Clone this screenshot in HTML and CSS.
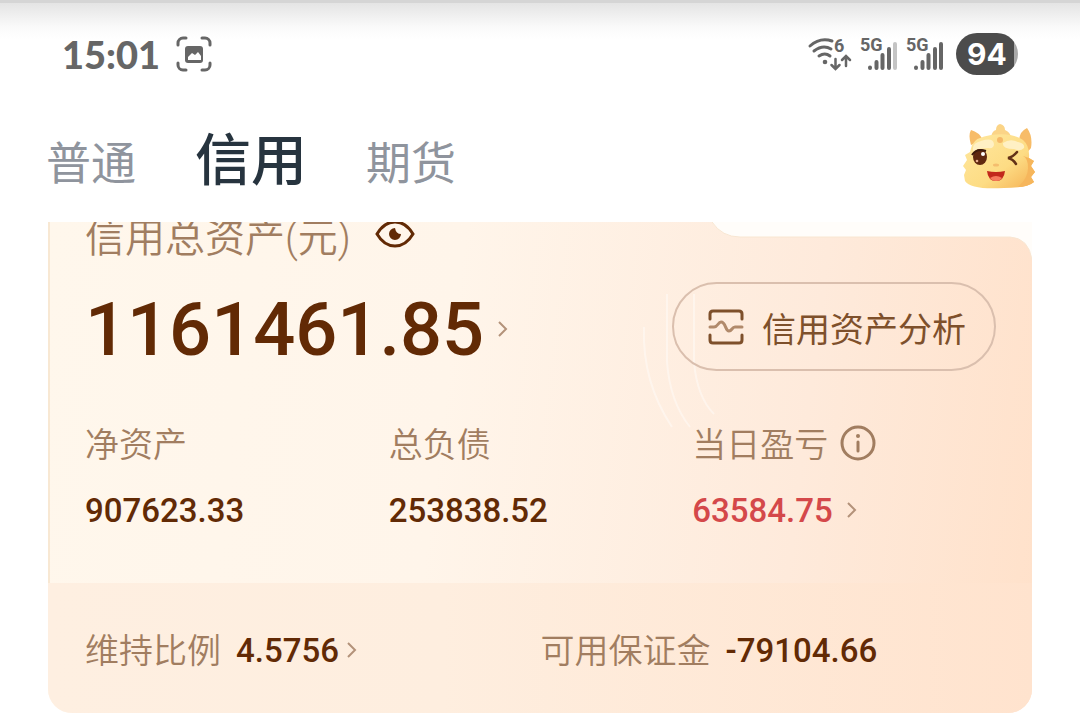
FILE: index.html
```html
<!DOCTYPE html>
<html lang="zh-CN">
<head>
  <meta charset="UTF-8">
  <meta name="viewport" content="width=device-width, initial-scale=1.0">
  <title>信用账户</title>
  <link rel="stylesheet" href="styles.css">
</head>
<body>
  <div class="status-bar">
    <div class="status-left">
      <span class="time">15:01</span>
      <svg class="icon-shot" viewBox="0 0 36 36" width="36" height="36" fill="none" stroke="#666" stroke-width="3" stroke-linecap="round">
        <path d="M2 9V7a5 5 0 0 1 5-5h3M26 2h3a5 5 0 0 1 5 5v2M34 27v2a5 5 0 0 1-5 5h-3M10 34H7a5 5 0 0 1-5-5v-2"/>
        <rect x="9" y="10" width="18" height="17" rx="3" fill="#666" stroke="none"/>
        <path d="M12 24v-3l4-4 3 2 3-3 3 4v4z" fill="#fff" stroke="none"/>
      </svg>
    </div>
    <div class="status-right">
      <svg viewBox="0 0 44 36" width="44" height="36" fill="none" stroke="#666" stroke-width="3" stroke-linecap="round">
        <path d="M2 10Q12 1 24 5M6 15q9-7 17-2M11 20q6-4 11 0"/>
        <circle cx="17" cy="26" r="2.3" fill="#666" stroke="none"/>
        <path d="M27.500 23v9M23.500 29l4 4 4-4M38 30v-9M34 24l4-4 4 4" stroke-width="2.500"/>
        <text class="net" x="26" y="16">6</text>
      </svg>
      <svg viewBox="0 0 38 36" width="38" height="36" stroke="#666" stroke-width="4" stroke-linecap="round">
        <text class="net" x="0" y="15">5G</text>
        <path d="M10 31.500v.5M16.500 26v6M22.500 19v13M29 13v19"/>
        <path d="M35 8v24" stroke="#c4c4c4"/>
      </svg>
      <svg viewBox="0 0 38 36" width="38" height="36" stroke="#666" stroke-width="4" stroke-linecap="round">
        <text class="net" x="0" y="15">5G</text>
        <path d="M10 31.500v.5M16.500 26v6M22.500 19v13M29 13v19M35 8v24"/>
      </svg>
      <span class="battery">94</span>
    </div>
  </div>

  <header class="header">
    <nav class="tabs">
      <a href="#" class="tab">普通</a>
      <a href="#" class="tab active">信用</a>
      <a href="#" class="tab">期货</a>
    </nav>
    <svg class="mascot" viewBox="0 0 72 68" width="72" height="68">
      <defs>
        <linearGradient id="face" x1="0" y1="0" x2="1" y2="1">
          <stop offset="0" stop-color="#ffe8a0"/>
          <stop offset=".6" stop-color="#fddc84"/>
          <stop offset="1" stop-color="#f5b052"/>
        </linearGradient>
      </defs>
      <path d="M8 22Q5 12 8 7q8 2 12 10zM56 17q1-9 8-12 6 8 4 20l-6 7z" fill="#f7bc68"/>
      <path d="M28 14q1-6 5-7 0-5 4-6 5 1 5 6 5 2 6 7z" fill="#fbd487"/>
      <path d="M9 22Q13 14 28 12q20-3 32 5 7 6 6 18l5 3-3 5 4 6-4 5 3 5q-7 6-30 6Q8 67 2 58l-1-6 2-5-3-4 4-6-2-5 5-3z" fill="url(#face)"/>
      <path d="M60 33q5 2 5 12t-10 19q10 0 16-5l-3-5 4-5-4-6 3-5-5-3z" fill="#f6b65c"/>
      <path d="M10 25q0-5 8-7 12-4 13 3 0 5-6 4-8 0-15 3zM40 20q7-5 15-1 7 1 6 6-4 4-10 1-12 0-11-6z" fill="#fff0c4"/>
      <circle cx="37" cy="17" r="3" fill="#f5b868"/>
      <ellipse cx="17" cy="34" rx="7" ry="8" fill="#60280f"/>
      <path d="M9 32q5-7 14-4" fill="none" stroke="#3e1b0d" stroke-width="2"/>
      <circle cx="20" cy="31" r="2" fill="#fff"/>
      <circle cx="14" cy="38" r="1.300" fill="#e8b092"/>
      <path d="M54 29q-4 5-9 6 5 1 8 6" fill="none" stroke="#633117" stroke-width="2.500" stroke-linecap="round"/>
      <ellipse cx="33" cy="42" rx="3" ry="1.500" fill="#f4bd6e"/>
      <path d="M24 48q9 2 18 0-1 10-9 10t-9-10z" fill="#c2281b"/>
      <path d="M27 55q6-4 12 0-2 3-6 3t-6-3z" fill="#f67a5c"/>
    </svg>
  </header>

  <main class="card">
    <svg class="notch" viewBox="0 0 320 40" width="320" height="40">
      <path d="M0 0Q10 15 28 15H298Q317 16 320 38V0z" fill="#fffdfa"/>
      <path d="M0 0Q10 15 28 15H298Q317 16 320 38" fill="none" stroke="#f8e6d2" stroke-width="1"/>
    </svg>
    <svg class="rings" viewBox="0 0 120 200" width="120" height="200" fill="none" stroke="#fff" stroke-width="2">
      <path d="M20 55Q18 110 48 155M43 22V90Q46 130 66 155M70 22V90Q73 125 90 142" opacity=".4"/>
    </svg>

    <section class="summary">
      <div class="total-label">
        <span>信用总资产(元)</span>
        <svg viewBox="0 0 40 28" width="40" height="28" fill="none" stroke="#622a05" stroke-width="3">
          <path d="M2 12Q9 0 20 0t18 12Q31 24 20 24T2 12z"/>
          <path d="M20 6a6 6 0 1 0 6 6q-5 0-6-6z" fill="#622a05" stroke="none"/>
        </svg>
      </div>

      <div class="total-row">
        <div class="total">
          <span>1161461.85</span>
          <svg class="chevron" viewBox="0 0 10 16" width="10" height="16"><path d="M1 0l7 7-7 7"/></svg>
        </div>
        <button class="analysis" type="button">
          <svg viewBox="0 0 36 36" width="36" height="36" fill="none" stroke="#7e502b" stroke-width="3" stroke-linecap="round">
            <path d="M2 10V5q0-3 3-3h26q3 0 3 3v5M2 26v5q0 3 3 3h26q3 0 3-3v-5"/>
            <path d="M2 18h4c4 0 4-5 7-5 5 0 4 9 8 9 3 0 3-4 6-4h7" stroke="#b18a6b"/>
          </svg>
          <span>信用资产分析</span>
        </button>
      </div>

      <div class="stats">
        <div class="stat">
          <div class="label">净资产</div>
          <div class="value">907623.33</div>
        </div>
        <div class="stat">
          <div class="label">总负债</div>
          <div class="value">253838.52</div>
        </div>
        <div class="stat">
          <div class="label">当日盈亏
            <svg viewBox="0 0 36 36" width="36" height="36" fill="none" stroke="#a17d60" stroke-width="3" stroke-linecap="round">
              <circle cx="18" cy="16" r="16"/>
              <path d="M18 15v9"/>
              <circle cx="18" cy="9" r="2" fill="#a17d60" stroke="none"/>
            </svg>
          </div>
          <div class="value red">63584.75
            <svg class="chevron" viewBox="0 0 10 16" width="10" height="16"><path d="M1 0l7 7-7 7"/></svg>
          </div>
        </div>
      </div>
    </section>

    <section class="margin-info">
      <div class="margin-item">
        <span class="label">维持比例</span>
        <span class="value">4.5756</span>
        <svg class="chevron" viewBox="0 0 10 16" width="10" height="16"><path d="M1 0l7 7-7 7"/></svg>
      </div>
      <div class="margin-item">
        <span class="label">可用保证金</span>
        <span class="value">-79104.66</span>
      </div>
    </section>
  </main>
</body>
</html>
```
FILE: styles.css
```css
* {
  box-sizing: border-box;
}

body {
  margin: 0;
  font-family: Roboto, "Noto Sans CJK SC", sans-serif;
  color: #622a05;
  background: #fff;
}

svg {
  flex: none;
  overflow: visible;
}

.status-bar {
  display: flex;
  justify-content: space-between;
  align-items: center;
  height: 108px;
  padding: 0 62px 4px;
  border-top: 3px solid #d5d5d5;
  background: linear-gradient(#e4e4e4, #fafafa 24px, #fff 36px);
}

.status-left,
.status-right {
  display: flex;
  align-items: center;
}

.status-left {
  gap: 16px;
}

.status-right {
  gap: 8px;
}

.time {
  font-family: Lato, sans-serif;
  font-size: 38px;
  font-weight: 900;
  color: #666;
}

.net {
  font-size: 18px;
  font-weight: 700;
  fill: #666;
  stroke: none;
}

.battery {
  width: 62px;
  margin-left: 4px;
  border-radius: 21px;
  background: linear-gradient(90deg, #4c4c4c 58px, #a9a9a9 58px);
  color: #fff;
  font-family: Inter, sans-serif;
  font-size: 30px;
  font-weight: 700;
  line-height: 42px;
  text-align: center;
}

.header {
  display: flex;
  justify-content: space-between;
  align-items: center;
  height: 114px;
  padding: 0 45px 16px 46px;
}

.tabs {
  display: flex;
  align-items: baseline;
  gap: 59px;
  padding-top: 12px;
}

.tab {
  font-size: 45px;
  line-height: 64px;
  color: #8f949d;
  text-decoration: none;
}

.tab.active {
  font-size: 56px;
  font-weight: 500;
  color: #27343f;
}

.card {
  position: relative;
  margin: 0 48px;
  overflow: hidden;
  border-radius: 0 0 24px 24px;
  background: linear-gradient(97deg, #fff7ec 0%, #fff5ea 40%, #feeadb 75%, #ffe1ca 100%);
}

.notch {
  position: absolute;
  top: 0;
  right: 0;
}

.rings {
  position: absolute;
  top: 50px;
  right: 288px;
}

.summary {
  position: relative;
  padding: 0 36px 48px 35px;
  border-left: 2px solid #f8e8d3;
}

.total-label {
  display: flex;
  align-items: flex-start;
  gap: 24px;
  height: 34px;
  font-size: 40px;
  font-weight: 350;
  line-height: 34px;
  color: #a17d60;
}

.total-row {
  display: flex;
  justify-content: space-between;
  align-items: center;
  margin-top: 26px;
}

.total {
  display: flex;
  align-items: center;
  gap: 14px;
  padding-top: 6px;
  font-size: 74px;
  font-weight: 500;
  line-height: 80px;
}

.chevron {
  fill: none;
  stroke: #b3927a;
  stroke-width: 2;
}

.analysis {
  display: flex;
  align-items: center;
  justify-content: center;
  gap: 18px;
  width: 324px;
  height: 89px;
  padding: 0 0 0 6px;
  border: 2px solid #dabfae;
  border-radius: 45px;
  background: none;
  color: #7e502b;
  font-family: inherit;
  font-size: 34px;
  cursor: pointer;
}

.analysis span {
  padding-top: 2px;
}

.stats {
  display: grid;
  grid-template-columns: repeat(3, 1fr);
  margin-top: 50px;
}

.label {
  display: flex;
  align-items: center;
  gap: 12px;
  font-size: 34px;
  font-weight: 350;
  line-height: 48px;
  color: #a17d60;
}

.value {
  display: flex;
  align-items: center;
  gap: 14px;
  font-size: 33px;
  font-weight: 500;
  line-height: 48px;
}

.stat .value {
  margin-top: 18px;
}

.red {
  color: #d4484a;
}

.margin-info {
  display: grid;
  grid-template-columns: 1fr 1fr;
  padding: 44px 36px 38px 37px;
  background: linear-gradient(90deg, #feefe1 0%, #feeedf 40%, #ffe3ce 100%);
}

.margin-item {
  display: flex;
  align-items: center;
}

.margin-item .value {
  margin: 0 8px 0 15px;
}
```
